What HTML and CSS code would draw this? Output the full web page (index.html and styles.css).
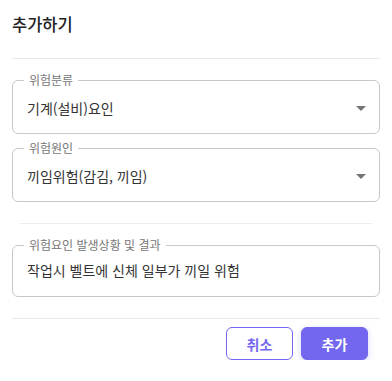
FILE: index.html
```html
<!DOCTYPE html>
<html lang="ko">
<head>
    <meta charset="UTF-8">
    <meta name="viewport" content="width=device-width, initial-scale=1.0">
    <title>추가하기</title>
    <link rel="stylesheet" href="styles.css">
</head>
<body>

<div class="dialog">
    <h2 class="dialog-title">추가하기</h2>
    <hr class="divider">

    <div class="dialog-body">
        <fieldset class="field">
            <legend>위험분류</legend>
            <div class="field-value">
                <span>기계(설비)요인</span>
                <span class="arrow"></span>
            </div>
        </fieldset>

        <fieldset class="field">
            <legend>위험원인</legend>
            <div class="field-value">
                <span>끼임위험(감김, 끼임)</span>
                <span class="arrow"></span>
            </div>
        </fieldset>

        <hr class="divider inset">

        <fieldset class="field field-text">
            <legend>위험요인 발생상황 및 결과</legend>
            <div class="field-value">
                <span>작업시 벨트에 신체 일부가 끼일 위험</span>
            </div>
        </fieldset>
    </div>

    <hr class="divider">

    <div class="dialog-actions">
        <button class="btn btn-outline">취소</button>
        <button class="btn btn-primary">추가</button>
    </div>
</div>

</body>
</html>
```

FILE: styles.css
```css
body {
    margin: 0;
    font-family: "Noto Sans CJK KR", "Noto Sans", sans-serif;
    color: #333;
    background: #fff;
}
.dialog {
    padding: 0 12px;
}
.dialog-title {
    margin: 0;
    padding: 7px 0 17px;
    font-size: 16.5px;
    font-weight: 500;
    line-height: 34px;
    color: #222;
}
.divider {
    margin: 0;
    border: 0;
    border-top: 1px solid #e8e8e8;
}
.divider.inset {
    margin: 21px 8px 15px;
    border-top-color: #ececec;
}
.dialog-body {
    padding-top: 15px;
    padding-bottom: 21px;
}
.field {
    margin: 0 0 8px;
    padding: 0 12px 0 14px;
    border: 1px solid #c8c8c8;
    border-radius: 6px;
}
.field legend {
    padding: 0 5px;
    margin-left: -3px;
    font-size: 12px;
    line-height: 12px;
    color: #777;
}
.field-value {
    display: flex;
    align-items: center;
    justify-content: space-between;
    height: 50px;
    margin-top: -3px;
    font-size: 14px;
    color: #333;
}
.field-text {
    margin-bottom: 0;
}
.field-text .field-value {
    height: 44px;
    padding-bottom: 4px;
}
.arrow {
    width: 0;
    height: 0;
    margin-right: 1px;
    border-left: 5px solid transparent;
    border-right: 5px solid transparent;
    border-top: 5px solid #757575;
}
.dialog-actions {
    display: flex;
    justify-content: flex-end;
    gap: 8px;
    padding: 8px 12px 0 0;
}
.btn {
    width: 67px;
    height: 33px;
    border-radius: 6px;
    font-family: inherit;
    font-size: 14px;
    font-weight: 700;
    cursor: pointer;
}
.btn-outline {
    background: #fff;
    border: 1px solid #7367f0;
    color: #7367f0;
}
.btn-primary {
    background: #7367f0;
    border: 1px solid #7367f0;
    color: #fff;
    box-shadow: 0 2px 6px rgba(115, 103, 240, 0.3);
}
```
